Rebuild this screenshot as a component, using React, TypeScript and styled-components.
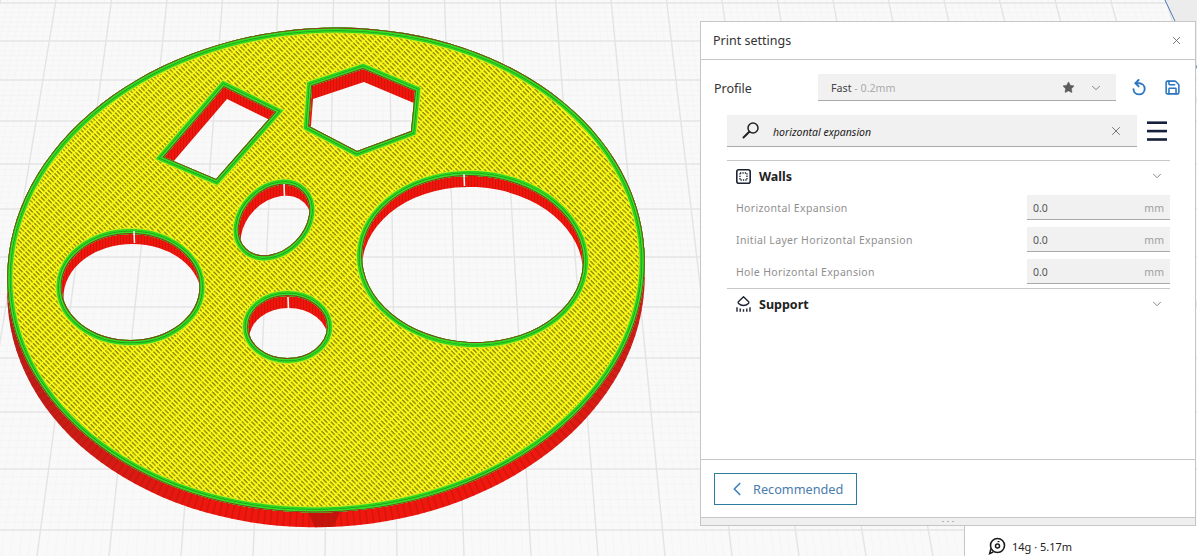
import React from 'react';
import styled, { createGlobalStyle } from 'styled-components';
import { ChevronDown, ChevronLeft, Save, Star, X } from 'lucide-react';

type Pt = [number, number];

const GlobalStyle = createGlobalStyle`
  html, body {
    margin: 0;
    padding: 0;
    background: #f9f9f9;
    font-family: "Noto Sans", "Open Sans", sans-serif;
  }
`;

const Stage = styled.div`
  position: relative;
  width: 1197px;
  height: 556px;
  overflow: hidden;
  background: #f9f9f9;
`;

const Viewport = styled.svg`
  position: absolute;
  inset: 0;
  display: block;
`;

const Panel = styled.section`
  position: absolute;
  top: 21px;
  left: 700px;
  width: 496px;
  height: 505px;
  box-sizing: border-box;
  display: flex;
  flex-direction: column;
  background: #fff;
  border: 1px solid #c6c6c6;
  color: #222;
`;

const PanelHeader = styled.header`
  height: 38px;
  box-sizing: border-box;
  flex: none;
  display: flex;
  align-items: center;
  justify-content: space-between;
  padding: 0 12px 0 12px;
  border-bottom: 1px solid #c6c6c6;
`;

const Title = styled.h1`
  margin: 0;
  font-size: 12.5px;
  font-weight: 400;
  color: #333;
`;

const PanelBody = styled.div`
  flex: 1;
  min-height: 0;
`;

const ProfileRow = styled.div`
  display: flex;
  align-items: center;
  height: 27px;
  margin-top: 14px;
  padding-left: 13px;
`;

const ProfileLabel = styled.span`
  width: 104px;
  padding-top: 1px;
  font-size: 12.5px;
  color: #333;
`;

const ProfileSelect = styled.div`
  width: 298px;
  height: 27px;
  box-sizing: border-box;
  display: flex;
  align-items: center;
  padding: 1px 13px 0;
  background: #f1f1f1;
  border-bottom: 1px solid #a9a9a9;
  font-size: 10.7px;
  color: #444;
`;

const Muted = styled.span`
  color: #ababab;
  white-space: pre;
`;

const SelectIcons = styled.div`
  margin-left: auto;
  display: flex;
  align-items: center;
  gap: 14px;
  color: #5c5c5c;
`;

const ActionIcons = styled.div`
  display: flex;
  align-items: center;
  gap: 17px;
  margin-left: 15px;
  color: #2c76c0;
`;

const SearchRow = styled.div`
  display: flex;
  align-items: center;
  gap: 10px;
  margin: 14px 0 0 26px;
`;

const SearchBox = styled.div`
  width: 410px;
  height: 32px;
  box-sizing: border-box;
  display: flex;
  align-items: center;
  padding: 0 14px;
  background: #f1f1f1;
  border-bottom: 1px solid #a9a9a9;
`;

const SearchText = styled.span`
  margin-left: 13px;
  padding-top: 3px;
  font-size: 10.5px;
  font-style: italic;
  color: #222;
`;

const Clear = styled.span`
  margin-left: auto;
  padding-top: 1px;
  display: flex;
  color: #666;
`;

const CategoryList = styled.div`
  width: 443px;
  margin: 13px 0 0 26px;
`;

const Category = styled.div`
  border-top: 1px solid #c8c8c8;
  padding-bottom: 4px;
`;

const CategoryHeader = styled.div`
  height: 30px;
  display: flex;
  align-items: center;
  gap: 8px;
  padding: 0 6px 0 9px;
  margin-bottom: 4px;
  font-size: 12.5px;
  font-weight: 700;
  color: #222;
`;

const Chevron = styled(ChevronDown)`
  margin-left: auto;
  color: #666;
`;

const SettingRow = styled.div`
  display: flex;
  align-items: center;
  justify-content: space-between;
  height: 25px;
  margin-bottom: 7px;
  padding-left: 9px;
  font-size: 10.5px;
  letter-spacing: 0.34px;
  color: #8f8f8f;

  &:last-child {
    margin-bottom: 0;
  }
`;

const ValueBox = styled.div`
  width: 143px;
  height: 25px;
  box-sizing: border-box;
  display: flex;
  align-items: center;
  justify-content: space-between;
  padding: 1px 6px 0;
  background: #f1f1f1;
  border-bottom: 1px solid #a9a9a9;
  letter-spacing: 0;
  color: #555;
`;

const Unit = styled.span`
  color: #a0a0a0;
`;

const PanelFooter = styled.footer`
  flex: none;
  height: 58px;
  box-sizing: border-box;
  padding: 13px;
  border-top: 1px solid #c6c6c6;
`;

const BackButton = styled.button`
  width: 143px;
  height: 32px;
  box-sizing: border-box;
  display: flex;
  align-items: center;
  gap: 5px;
  padding: 0 0 0 11px;
  background: #fff;
  border: 1px solid #2f7a9f;
  border-radius: 0;
  font-family: inherit;
  font-size: 12.7px;
  color: #4a7cae;
`;

const Grip = styled.div`
  flex: none;
  height: 7px;
  display: flex;
  align-items: center;
  justify-content: center;
  gap: 3px;
  background: #efefef;
  border-top: 1px solid #c6c6c6;
`;

const GripDot = styled.i`
  width: 2px;
  height: 1px;
  background: #b5b5b5;
`;

const InfoCard = styled.aside`
  position: absolute;
  left: 964px;
  top: 526px;
  right: 0;
  bottom: 0;
  box-sizing: border-box;
  display: flex;
  align-items: center;
  gap: 6px;
  padding: 10px 0 0 23px;
  background: #fff;
  border-left: 1px solid #c6c6c6;
  font-size: 11px;
  color: #222;
`;

const ellipse = (cx: number, cy: number, a: number, b: number, rot = 0) => {
  const t = (rot * Math.PI) / 180;
  const ux = a * Math.cos(t);
  const uy = a * Math.sin(t);
  return `M${cx - ux} ${cy - uy}A${a} ${b} ${rot} 1 1 ${cx + ux} ${cy + uy}A${a} ${b} ${rot} 1 1 ${cx - ux} ${cy - uy}Z`;
};

const poly = (p: Pt[]) => `M${p.map((q) => q.join(' ')).join('L')}Z`;

const holes: { d: (dx: number, dy: number) => string; dx: number; dy: number }[] = [
  { d: (x, y) => ellipse(130.5 + x, 287 + y, 69, 53), dx: 2, dy: 10 },
  { d: (x, y) => ellipse(472.5 + x, 259 + y, 110.5, 83, 3), dx: 0, dy: 11 },
  { d: (x, y) => ellipse(274 + x, 220 + y, 40, 30, -45), dx: 2, dy: 11 },
  { d: (x, y) => ellipse(287.5 + x, 327 + y, 39.5, 31), dx: 1, dy: 12 },
  { d: (x, y) => poly([[224 + x, 87 + y], [275 + x, 112 + y], [216 + x, 179 + y], [164 + x, 157 + y]]), dx: 3, dy: 12 },
  { d: (x, y) => poly([[363 + x, 69 + y], [415 + x, 91 + y], [411 + x, 131 + y], [357 + x, 151 + y], [309 + x, 126 + y], [312 + x, 86 + y]]), dx: 1, dy: 13 },
];

const seams: [number, number, number][] = [
  [134, 231, 243],
  [464, 174, 186],
  [284, 184, 197],
  [288, 297, 310],
];

const rows = [3, 41, 80, 121, 164, 209, 257, 307, 358, 412, 469, 530];

const topX = (k: number) => 389 + 55.5 * k;
const bottomX = (k: number) => 397 + (k < 0 ? 72 : 67) * k;

const GridLines: React.FC = () => {
  const minorY: number[] = [];
  rows.slice(0, -1).forEach((y, i) => {
    for (let s = 1; s < 8; s++) minorY.push(y + ((rows[i + 1] - y) * s) / 8);
  });
  const minorX: number[] = [];
  for (let k = -8; k <= 16; k += 0.125) minorX.push(k);
  const major: number[] = [];
  for (let k = -8; k <= 16; k++) major.push(k);
  return (
    <g>
      <g stroke="#f4f4f4" strokeWidth="0.8">
        {minorY.map((y) => (
          <line key={y} x1="0" x2="1197" y1={y} y2={y} />
        ))}
        {minorX.map((k) => (
          <line key={k} x1={topX(k)} y1="0" x2={bottomX(k)} y2="556" />
        ))}
      </g>
      <g stroke="#e4e4e4" strokeWidth="1.4">
        {rows.map((y) => (
          <line key={y} x1="0" x2="1197" y1={y} y2={y} />
        ))}
        {major.map((k) => (
          <line key={k} x1={topX(k)} y1="0" x2={bottomX(k)} y2="556" />
        ))}
      </g>
    </g>
  );
};

const PrintedDisc: React.FC = () => {
  const top = ellipse(326, 270, 319, 242, -3.5);
  const side = ellipse(326, 285, 319, 242, -3.5);
  const allHoles = holes.map((h) => h.d(0, 0)).join('');
  const rings = top + allHoles;
  const arcs: number[] = [];
  for (let r = 10; r < 340; r += 13) arcs.push(r);
  return (
    <g>
      <defs>
        <pattern id="infill" width="3.3" height="7" patternUnits="userSpaceOnUse" patternTransform="rotate(-45)">
          <rect width="3.3" height="7" fill="#fffb14" />
          <rect x="1.3" y="0" width="0.85" height="5.6" fill="#3c3c08" />
        </pattern>
        <pattern id="facets" width="3" height="10" patternUnits="userSpaceOnUse">
          <rect width="3" height="10" fill="#f2150b" />
          <rect width="1" height="10" fill="#d2140b" />
        </pattern>
        <linearGradient id="wallShade" x1="0" x2="1" y1="0" y2="0">
          <stop offset="0" stopColor="#b8201a" />
          <stop offset="0.32" stopColor="#ef170e" />
          <stop offset="0.8" stopColor="#f0180e" />
          <stop offset="1" stopColor="#c8201a" />
        </linearGradient>
        <clipPath id="surfaceClip">
          <path d={rings} clipRule="evenodd" />
        </clipPath>
        <clipPath id="wallClip">
          <path d={top + side} clipRule="evenodd" />
        </clipPath>
        {holes.map((h, i) => (
          <clipPath id={`hole${i}`} key={i}>
            <path d={h.d(0, 0)} />
          </clipPath>
        ))}
      </defs>

      <path d={top + side} fillRule="evenodd" fill="url(#wallShade)" />
      <g clipPath="url(#wallClip)">
        <path d={side} fill="none" stroke="#bd130b" strokeWidth="34" strokeDasharray="1.5 5" opacity="0.5" />
        <path d="M308 512h32l-8 18h-16z" fill="#b3140c" opacity="0.7" />
      </g>

      {holes.map((h, i) => (
        <path
          key={i}
          clipPath={`url(#hole${i})`}
          d={`M0 0H700V556H0Z${h.d(h.dx, h.dy)}`}
          fillRule="evenodd"
          fill="url(#facets)"
        />
      ))}

      <path d={rings} fillRule="evenodd" fill="url(#infill)" />
      <g clipPath="url(#surfaceClip)" fill="none">
        {arcs.map((r) => (
          <ellipse key={r} cx="326" cy="272" rx={r} ry={r * 0.75} stroke="#fbf824" strokeWidth="1" opacity="0.35" />
        ))}
        <path d={rings} stroke="#c6ea1e" strokeWidth="12" />
        <path d={rings} stroke="#2bd421" strokeWidth="10" />
        <path d={rings} stroke="#1c8a1c" strokeWidth="6.2" />
        <path d={rings} stroke="#33e024" strokeWidth="5.2" />
        <path d={rings} stroke="#8a3a1e" strokeWidth="1.8" />
      </g>

      {seams.map(([x, y1, y2]) => (
        <line key={x} x1={x} x2={x + 0.5} y1={y1} y2={y2} stroke="#f8f8f8" strokeWidth="1.6" />
      ))}
    </g>
  );
};

const SearchIcon = () => (
  <svg width="19" height="19" viewBox="0 0 19 19" fill="none" stroke="#222" strokeLinecap="round">
    <circle cx="12" cy="7" r="5" strokeWidth="1.5" />
    <path d="M8.3 10.7 2.5 16.5" strokeWidth="2" />
  </svg>
);

const UndoIcon = () => (
  <svg width="16" height="17" viewBox="0 0 16 17" fill="none" stroke="currentColor" strokeWidth="1.9" strokeLinecap="round">
    <path d="M5.5 4.2h3a5.6 5.6 0 1 1-6 6" />
    <path d="M7.6 1 4.4 4.2l3.2 3.2" />
  </svg>
);

const MenuIcon = () => (
  <svg width="20" height="20" viewBox="0 0 20 20" fill="#15203a">
    <rect y="0.4" width="20" height="2.6" />
    <rect y="8.8" width="20" height="2.6" />
    <rect y="17.2" width="20" height="2.6" />
  </svg>
);

const WallsIcon = () => (
  <svg width="15" height="15" viewBox="0 0 15 15" fill="none" stroke="#1c2433">
    <rect x="0.8" y="0.8" width="13.4" height="13.4" rx="2" strokeWidth="1.6" />
    <rect x="4" y="4" width="7" height="7" strokeWidth="1.3" strokeDasharray="1.3 1.1" />
  </svg>
);

const SupportIcon = () => (
  <svg width="15" height="16" viewBox="0 0 15 16" fill="none" stroke="#1c2433" strokeWidth="1.4">
    <path d="M7.5 0.8 12.4 5.4a1.4 1.4 0 0 1 0 2.1 7 7 0 0 1-9.8 0 1.4 1.4 0 0 1 0-2.1Z" />
    <path d="M1 15.8v-4.6M4.2 15.8v-3.2M7.5 15.8v-2.6M10.8 15.8v-3.2M14 15.8v-4.6" />
  </svg>
);

const SpoolIcon = () => (
  <svg width="18" height="18" viewBox="0 0 18 18" fill="none" stroke="#1c1c1c">
    <circle cx="9.5" cy="8.5" r="7" strokeWidth="1.6" />
    <circle cx="9.5" cy="9" r="2" strokeWidth="1.5" />
    <path d="M9.5 4.6h2" strokeWidth="1.2" />
    <path d="M3 11.5 1.6 16.6l3.6-1.6" strokeWidth="1.5" />
  </svg>
);

const settings = ['Horizontal Expansion', 'Initial Layer Horizontal Expansion', 'Hole Horizontal Expansion'];

const App: React.FC = () => (
  <Stage>
    <GlobalStyle />
    <Viewport width="1197" height="556" viewBox="0 0 1197 556">
      <GridLines />
      <path d="M1165 0h32v70z" fill="#ececec" />
      <line x1="1165" y1="0" x2="1198" y2="70" stroke="#4a78b8" strokeWidth="1" />
      <PrintedDisc />
    </Viewport>

    <Panel>
      <PanelHeader>
        <Title>Print settings</Title>
        <X size={13} color="#666" strokeWidth={1.6} />
      </PanelHeader>
      <PanelBody>
        <ProfileRow>
          <ProfileLabel>Profile</ProfileLabel>
          <ProfileSelect>
            Fast<Muted> - 0.2mm</Muted>
            <SelectIcons>
              <Star size={13} fill="currentColor" strokeWidth={1} />
              <ChevronDown size={14} strokeWidth={1.3} />
            </SelectIcons>
          </ProfileSelect>
          <ActionIcons>
            <UndoIcon />
            <Save size={17} strokeWidth={2.2} />
          </ActionIcons>
        </ProfileRow>

        <SearchRow>
          <SearchBox>
            <SearchIcon />
            <SearchText>horizontal expansion</SearchText>
            <Clear>
              <X size={14} strokeWidth={1.5} />
            </Clear>
          </SearchBox>
          <MenuIcon />
        </SearchRow>

        <CategoryList>
          <Category>
            <CategoryHeader>
              <WallsIcon />
              Walls
              <Chevron size={14} strokeWidth={1.3} />
            </CategoryHeader>
            {settings.map((label) => (
              <SettingRow key={label}>
                {label}
                <ValueBox>
                  0.0
                  <Unit>mm</Unit>
                </ValueBox>
              </SettingRow>
            ))}
          </Category>
          <Category>
            <CategoryHeader>
              <SupportIcon />
              Support
              <Chevron size={14} strokeWidth={1.3} />
            </CategoryHeader>
          </Category>
        </CategoryList>
      </PanelBody>
      <PanelFooter>
        <BackButton type="button">
          <ChevronLeft size={22} color="#3f7fb8" strokeWidth={1.8} />
          Recommended
        </BackButton>
      </PanelFooter>
      <Grip>
        <GripDot />
        <GripDot />
        <GripDot />
      </Grip>
    </Panel>

    <InfoCard>
      <SpoolIcon />
      14g · 5.17m
    </InfoCard>
  </Stage>
);

export default App;
